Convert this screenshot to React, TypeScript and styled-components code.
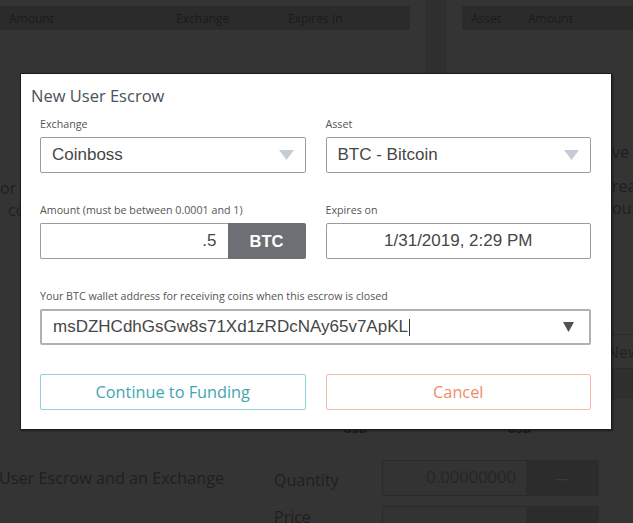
import * as React from "react";
import styled, { createGlobalStyle } from "styled-components";

const GlobalStyle = createGlobalStyle`
  html, body {
    margin: 0;
    padding: 0;
    background: #343434;
    overflow: hidden;
  }
  * {
    box-sizing: border-box;
  }
`;

const Page = styled.div`
  position: relative;
  width: 633px;
  height: 523px;
  overflow: hidden;
  background: #343434;
  font-family: "Open Sans", "Liberation Sans", sans-serif;
  color: #1f1f1f;
`;

const Top = styled.div`
  display: flex;
  height: 410px;
`;

const LeftPane = styled.div`
  width: 425px;
  flex-shrink: 0;
  padding-top: 6px;
`;

const Gutter = styled.div`
  width: 22px;
  flex-shrink: 0;
  background: #2f2f2f;
`;

const RightPane = styled.div`
  flex: 1;
  padding-top: 6px;
  white-space: nowrap;
`;

const TableHead = styled.div<{ $cols: string; $inset?: string }>`
  display: grid;
  grid-template-columns: ${(p) => p.$cols};
  align-items: center;
  height: 24px;
  margin: ${(p) => p.$inset || "0"};
  padding-left: 9px;
  background: #2b2b2b;
  border-radius: 2px;
  font-size: 12px;
  color: #1b1b1b;
  white-space: nowrap;
`;

const Notice = styled.p<{ $top: number; $indent?: number }>`
  margin: ${(p) => p.$top}px 0 0;
  padding-left: ${(p) => p.$indent || 0}px;
  font-size: 16px;
  line-height: 22px;
  color: #1f1f1f;
  white-space: nowrap;
`;

const Indented = styled.span`
  display: block;
  padding-left: 8px;
`;

const TabRow = styled.div`
  margin-top: 115px;
  height: 35px;
  padding-left: 160px;
  display: flex;
  align-items: center;
  border-top: 1px solid #2a2a2a;
  border-bottom: 1px solid #2a2a2a;
  font-size: 16px;
  color: #222;
`;

const TabBand = styled.div`
  height: 30px;
  background: #2f2f2f;
`;

const Bottom = styled.div`
  padding-top: 11px;
`;

const UnitRow = styled.div`
  height: 16px;
  display: grid;
  grid-template-columns: 343px 164px auto;
  font-size: 12px;
  line-height: 16px;
  font-weight: 700;
  color: #1c1c1c;
`;

const OrderForm = styled.div`
  margin-top: 23px;
  display: grid;
  grid-template-columns: 274px 108px 217px;
  grid-auto-rows: 36px;
  row-gap: 10px;
  align-items: center;
`;

const Caption = styled.div`
  font-size: 16.2px;
  color: #1f1f1f;
  white-space: nowrap;
  margin-left: -1px;
`;

const FieldName = styled.div<{ $top?: boolean }>`
  align-self: ${(p) => (p.$top ? "start" : "center")};
  margin-top: ${(p) => (p.$top ? "0" : "3px")};
  font-size: 16px;
  line-height: 22px;
  color: #1f1f1f;
`;

const DarkGroup = styled.div`
  display: flex;
  height: 36px;
`;

const DarkInput = styled.div`
  flex: 1;
  border: 1px solid #2a2a2a;
  border-right: none;
  background: #333;
  display: flex;
  align-items: center;
  justify-content: flex-end;
  padding-right: 10px;
  font-family: "Liberation Sans", Arial, sans-serif;
  font-size: 17px;
  color: #272727;
`;

const DarkAddon = styled.div`
  width: 73px;
  background: #2c2c2c;
  display: flex;
  align-items: center;
  justify-content: center;
  color: #3a3a3a;
  font-size: 14px;
`;

/* modal */

const Modal = styled.div`
  position: absolute;
  left: 20px;
  top: 73px;
  width: 592px;
  background: #fff;
  border: 1px solid #1c1c1c;
  box-shadow: 1px 1px 2px rgba(0, 0, 0, 0.45);
  padding: 12px 20px 19px 19px;
`;

const Title = styled.h2`
  margin: 0 0 0 -9px;
  font-size: 16.5px;
  line-height: 20px;
  font-weight: 400;
  color: #4b5159;
`;

const FormGrid = styled.div`
  margin-top: 11px;
  display: grid;
  grid-template-columns: 1fr 1fr;
  column-gap: 20px;
  row-gap: 30px;
`;

const Field = styled.div<{ $wide?: boolean }>`
  grid-column: ${(p) => (p.$wide ? "1 / -1" : "auto")};
  display: flex;
  flex-direction: column;
  min-width: 0;
`;

const Label = styled.label`
  display: block;
  font-size: 10.7px;
  line-height: 14px;
  color: #555;
  margin-bottom: 6px;
  white-space: nowrap;
`;

const Box = styled.div<{ $align?: string; $strong?: boolean }>`
  height: 36px;
  display: flex;
  align-items: center;
  justify-content: ${(p) => p.$align || "space-between"};
  padding: 0 11px 0 11px;
  border: ${(p) => (p.$strong ? "2px solid #b1b1b1" : "1px solid #9c9c9c")};
  border-radius: 2px;
  background: #fff;
  font-family: "Liberation Sans", Arial, sans-serif;
  font-size: 17px;
  color: #464646;
  white-space: nowrap;
`;

const Caret = styled.span`
  display: inline-block;
  width: 1px;
  height: 17px;
  margin-left: 1px;
  background: #333;
  vertical-align: middle;
`;

const AmountGroup = styled.div`
  display: flex;
  height: 36px;
`;

const AmountInput = styled(Box)`
  flex: 1;
  border-right: none;
  border-radius: 2px 0 0 2px;
  justify-content: flex-end;
`;

const Addon = styled.div`
  width: 78px;
  display: flex;
  align-items: center;
  justify-content: center;
  background: #6c6f73;
  border-radius: 0 2px 2px 0;
  color: #fff;
  font-family: "Liberation Sans", Arial, sans-serif;
  font-weight: 700;
  font-size: 16.5px;
`;

const Actions = styled.div`
  margin-top: 29px;
  display: grid;
  grid-template-columns: 1fr 1fr;
  column-gap: 20px;
`;

const Button = styled.button<{ $tone: "teal" | "salmon" }>`
  height: 36px;
  border: 1.5px solid ${(p) => (p.$tone === "teal" ? "#8fd2d7" : "#f6bba8")};
  border-radius: 2px;
  background: #fff;
  font-family: "Open Sans", "Liberation Sans", sans-serif;
  font-size: 16.3px;
  color: ${(p) => (p.$tone === "teal" ? "#3ea6b0" : "#f08b6a")};
  padding: 0;
  cursor: pointer;
`;

const SoftArrow = () => (
  <svg width="15" height="10" viewBox="0 0 15 10">
    <polygon points="0,0 15,0 7.5,10" fill="#c6ccd3" />
  </svg>
);

const DarkArrow = () => (
  <svg width="11" height="10" viewBox="0 0 11 10" style={{ marginRight: 4 }}>
    <polygon points="0,0 11,0 5.5,10" fill="#4f5357" />
  </svg>
);

const App: React.FC = () => {
  return (
    <Page>
      <GlobalStyle />
      <Top>
        <LeftPane>
          <TableHead $cols="167px 112px auto" $inset="0 15px 0 0">
            <span>Amount</span>
            <span>Exchange</span>
            <span>Expires In</span>
          </TableHead>
          <Notice $top={147}>
            or
            <Indented>co</Indented>
          </Notice>
        </LeftPane>
        <Gutter />
        <RightPane>
          <TableHead $cols="57px auto" $inset="0 0 0 15px">
            <span>Asset</span>
            <span>Amount</span>
          </TableHead>
          <Notice $top={111} $indent={165}>
            ve received no offers
          </Notice>
          <Notice $top={12} $indent={165}>
            reate one
            <br />
            our own
          </Notice>
          <TabRow>New</TabRow>
          <TabBand />
        </RightPane>
      </Top>
      <Bottom>
        <UnitRow>
          <span />
          <span>USD</span>
          <span>USD</span>
        </UnitRow>
        <OrderForm>
          <Caption>User Escrow and an Exchange</Caption>
          <FieldName>Quantity</FieldName>
          <DarkGroup>
            <DarkInput>0.00000000</DarkInput>
            <DarkAddon>—</DarkAddon>
          </DarkGroup>
          <span />
          <FieldName $top>Price</FieldName>
          <DarkGroup>
            <DarkInput />
            <DarkAddon />
          </DarkGroup>
        </OrderForm>
      </Bottom>

      <Modal>
        <Title>New User Escrow</Title>
        <FormGrid>
          <Field>
            <Label>Exchange</Label>
            <Box>
              <span>Coinboss</span>
              <SoftArrow />
            </Box>
          </Field>
          <Field>
            <Label>Asset</Label>
            <Box>
              <span>BTC - Bitcoin</span>
              <SoftArrow />
            </Box>
          </Field>
          <Field>
            <Label>Amount (must be between 0.0001 and 1)</Label>
            <AmountGroup>
              <AmountInput>.5</AmountInput>
              <Addon>BTC</Addon>
            </AmountGroup>
          </Field>
          <Field>
            <Label>Expires on</Label>
            <Box $align="center">1/31/2019, 2:29 PM</Box>
          </Field>
          <Field $wide>
            <Label>
              Your BTC wallet address for receiving coins when this escrow is
              closed
            </Label>
            <Box $strong>
              <span>
                msDZHCdhGsGw8s71Xd1zRDcNAy65v7ApKL
                <Caret />
              </span>
              <DarkArrow />
            </Box>
          </Field>
        </FormGrid>
        <Actions>
          <Button $tone="teal">Continue to Funding</Button>
          <Button $tone="salmon">Cancel</Button>
        </Actions>
      </Modal>
    </Page>
  );
};

export default App;
